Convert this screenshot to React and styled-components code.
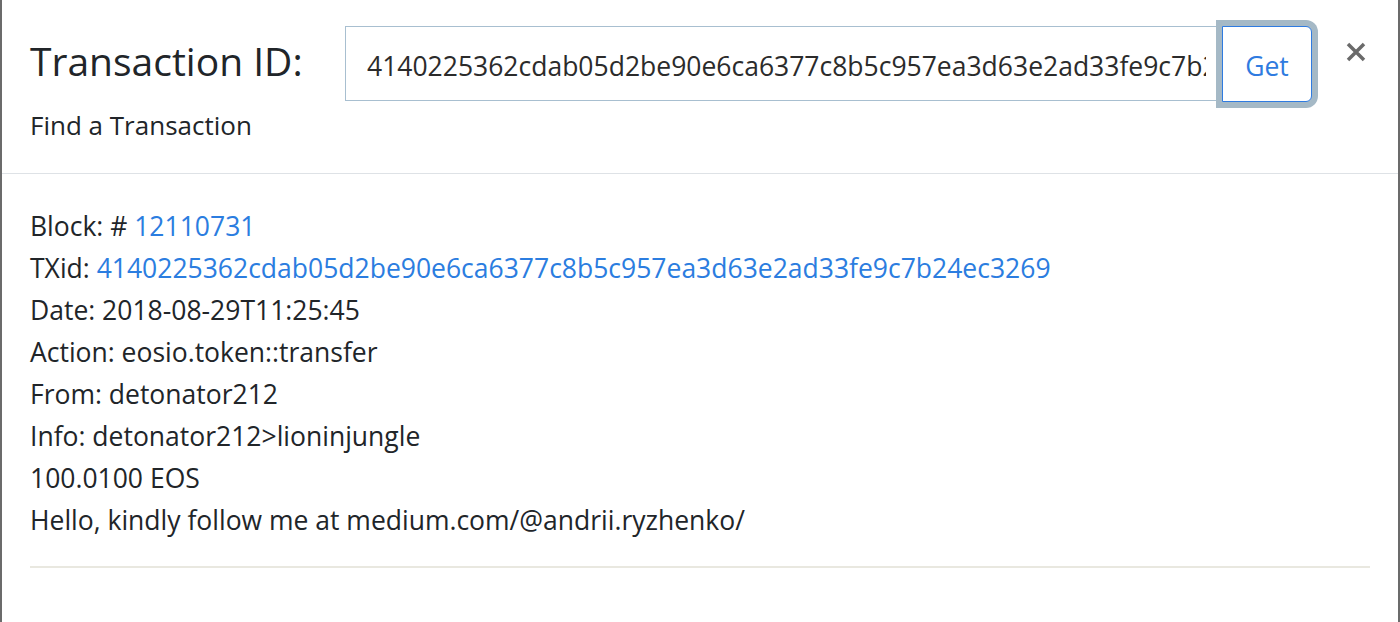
import React from "react";
import styled, { createGlobalStyle } from "styled-components";

const Global = createGlobalStyle`
  html, body { margin: 0; padding: 0; background: #fff; }
  body { font-family: "Open Sans", "Noto Sans", sans-serif; color: #212529; }
  * { box-sizing: border-box; }
`;

const Modal = styled.div`
  width: 1400px;
  height: 622px;
  background: #fff;
  border-left: 2px solid #6b6b6b;
  border-right: 2px solid #6b6b6b;
  display: flex;
  flex-direction: column;
`;

const Header = styled.div`
  display: flex;
  align-items: flex-start;
  padding: 24px 28px 0 28px;
  height: 174px;
  border-bottom: 1px solid #dee2e6;
`;

const TitleBlock = styled.div`
  display: flex;
  flex-direction: column;
  width: 315px;
  flex-shrink: 0;
  padding-top: 7px;
`;

const Title = styled.h4`
  margin: 0;
  font-size: 39px;
  font-weight: 400;
  line-height: 60px;
  color: #212529;
`;

const Subtitle = styled.div`
  font-size: 26px;
  line-height: 42px;
  margin-top: 13px;
  color: #212529;
`;

const InputGroup = styled.div`
  display: flex;
  margin-top: 2px;
`;

const Input = styled.input`
  width: 877px;
  height: 75px;
  border: 1px solid #a8bfd0;
  border-right: none;
  padding: 4px 16px 0 21px;
  font-family: inherit;
  font-size: 26.5px;
  color: #2b2b2b;
  background: #fff;
  outline: none;
  margin: 0;
`;

const GetButton = styled.button`
  width: 90px;
  height: 76px;
  background: #fff;
  border: 1px solid #2f7be0;
  border-radius: 0 6px 6px 0;
  color: #2f7be0;
  font-family: inherit;
  font-size: 26.5px;
  box-shadow: 0 0 0 6px #a5b9c6;
  padding: 4px 0 0 0;
  position: relative;
`;

const Close = styled.div`
  margin-left: 30px;
  margin-top: 14px;
  width: 28px;
  height: 28px;
  display: flex;
  align-items: center;
  justify-content: center;
`;

const Body = styled.div`
  padding: 31px 28px 0 28px;
`;

const Line = styled.div`
  font-size: 26.5px;
  line-height: 42px;
  color: #212529;
  white-space: nowrap;
`;

const Link = styled.a`
  color: #2b7de0;
  text-decoration: none;
`;

const Rule = styled.hr`
  margin: 25px 0 0 0;
  border: none;
  border-top: 2px solid #e9e8e0;
`;

const txid = "4140225362cdab05d2be90e6ca6377c8b5c957ea3d63e2ad33fe9c7b24ec3269";

export default function App() {
  return (
    <>
      <Global />
      <Modal>
        <Header>
          <TitleBlock>
            <Title>Transaction ID:</Title>
            <Subtitle>Find a Transaction</Subtitle>
          </TitleBlock>
          <InputGroup>
            <Input readOnly value={txid} />
            <GetButton>Get</GetButton>
          </InputGroup>
          <Close>
            <svg width="22" height="22" viewBox="0 0 22 22">
              <path d="M3 3 L19 19 M19 3 L3 19" stroke="#6a6a6a" strokeWidth="3.5" strokeLinecap="butt" />
            </svg>
          </Close>
        </Header>
        <Body>
          <Line>Block: # <Link>12110731</Link></Line>
          <Line>TXid: <Link>{txid}</Link></Line>
          <Line>Date: 2018-08-29T11:25:45</Line>
          <Line>Action: eosio.token::transfer</Line>
          <Line>From: detonator212</Line>
          <Line>Info: detonator212&gt;lioninjungle</Line>
          <Line>100.0100 EOS</Line>
          <Line>Hello, kindly follow me at medium.com/@andrii.ryzhenko/</Line>
          <Rule />
        </Body>
      </Modal>
    </>
  );
}
